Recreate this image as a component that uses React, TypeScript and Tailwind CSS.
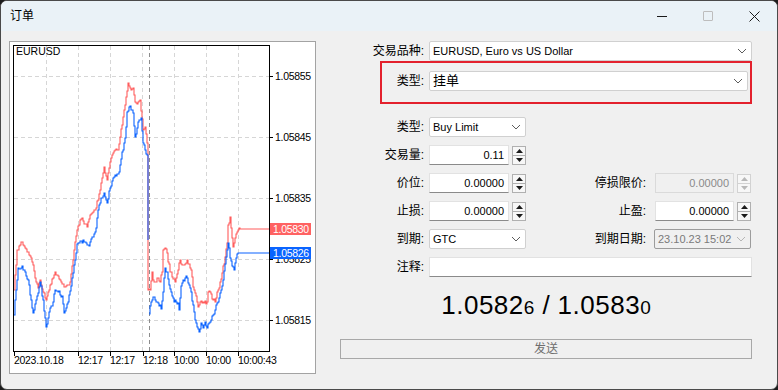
import React from "react";

type Pt = [number, number];

// pseudo random so the tick noise stays the same between renders
function rng(seed: number) {
  let s = seed;
  return () => {
    s = (s * 16807) % 2147483647;
    return s / 2147483647;
  };
}

function stepPath(segments: Pt[][], seed: number, amp = 2.2) {
  const r = rng(seed);
  let d = "";
  for (const pts of segments) {
    d += `M${pts[0][0]} ${pts[0][1]}`;
    for (let i = 1; i < pts.length; i++) {
      const [x0, y0] = pts[i - 1];
      const [x1, y1] = pts[i];
      if (x1 === x0) {
        d += ` V${y1}`;
        continue;
      }
      if (y0 === y1 && x1 - x0 > 8) {
        d += ` H${x1}`;
        continue;
      }
      for (let x = x0 + 1; x <= x1; x++) {
        const t = (x - x0) / (x1 - x0);
        let y = y0 + (y1 - y0) * t;
        if (x < x1) y += (r() - 0.5) * 2 * amp;
        d += ` H${x} V${Math.round(y)}`;
      }
    }
  }
  return d;
}

const bid: Pt[][] = [
  [
    [14, 315], [16, 290], [18, 268], [22, 266], [25, 272], [28, 280], [31, 300], [33, 313],
    [36, 300], [40, 282], [43, 300], [46, 327], [49, 312], [52, 306], [55, 290], [58, 292],
    [62, 296], [64, 313], [68, 302], [72, 278], [75, 260], [77, 244], [80, 241], [85, 242],
    [88, 245], [90, 242], [93, 237], [96, 228], [98, 210], [101, 198], [104, 193], [107, 203],
    [110, 188], [113, 178], [116, 176], [118, 174], [120, 165], [122, 152], [125, 138],
    [127, 112], [129, 107], [131, 110], [133, 113], [135, 137], [137, 128], [139, 120],
    [141, 118], [143, 143], [145, 150], [147, 155], [148, 162], [148, 240],
  ],
  [
    [149, 314], [150, 306], [152, 300], [154, 297], [156, 302], [158, 303], [160, 305],
    [161, 309], [163, 292], [165, 268], [167, 272], [169, 285], [171, 292], [173, 298],
    [176, 302], [178, 303], [179, 310], [181, 286], [183, 280], [185, 278], [187, 278],
    [189, 285], [191, 292], [193, 305], [195, 320], [197, 327], [199, 332], [201, 323],
    [203, 328], [205, 322], [207, 328], [209, 323], [211, 320], [213, 315], [215, 310],
    [217, 303], [219, 298], [221, 290], [223, 280], [225, 264], [227, 250], [228, 243],
    [230, 258], [232, 266], [234, 270], [236, 258], [238, 253], [269, 253],
  ],
];

const ask: Pt[][] = [
  [
    [14, 290], [16, 265], [17, 250], [20, 245], [22, 242], [25, 248], [28, 252], [31, 258],
    [33, 265], [36, 282], [38, 288], [40, 280], [43, 292], [46, 300], [48, 292], [50, 285],
    [53, 278], [55, 272], [58, 276], [60, 280], [63, 284], [65, 287], [68, 285], [70, 282],
    [73, 260], [75, 242], [77, 230], [80, 220], [82, 218], [85, 224], [87, 227], [90, 215],
    [93, 212], [95, 210], [98, 200], [100, 190], [102, 178], [104, 167], [107, 180],
    [110, 162], [112, 155], [115, 150], [118, 150], [120, 137], [123, 117], [126, 97],
    [128, 83], [130, 88], [131, 90], [133, 88], [135, 102], [138, 102], [140, 100],
    [143, 130], [145, 127], [147, 143], [148, 148], [148, 290], [150, 290], [152, 272],
    [153, 280], [155, 282], [158, 278], [160, 282], [162, 272], [163, 250], [165, 248],
    [167, 253], [168, 262], [172, 277], [175, 282], [178, 270], [180, 260], [183, 265],
    [187, 260], [190, 268], [192, 277], [193, 287], [197, 302], [198, 307], [200, 302],
    [207, 302], [208, 292], [210, 292], [213, 300], [215, 302], [218, 290], [222, 273],
    [225, 257], [227, 243], [228, 225], [230, 217], [232, 238], [233, 247], [235, 238],
    [237, 232], [238, 230], [240, 229], [269, 229],
  ],
];

const gridX = [46, 78, 110, 142, 174, 206, 238];
const gridY = [76, 137, 198, 259, 320];
const prices = ["1.05855", "1.05845", "1.05835", "1.05825", "1.05815"];
const times: [number, string][] = [
  [14, "2023.10.18"],
  [78, "12:17"],
  [110, "12:17"],
  [143, "12:18"],
  [174, "10:00"],
  [206, "10:00"],
  [238, "10:00:43"],
];

function Chart() {
  const font = "Liberation Sans, Arial, sans-serif";
  return (
    <svg width="305" height="331" viewBox="10 42 305 331">
      <defs>
        <clipPath id="plot">
          <rect x="14" y="46" width="255" height="305" />
        </clipPath>
      </defs>
      {gridX.map((x) => (
        <line key={x} x1={x + 0.5} y1={46} x2={x + 0.5} y2={351} stroke="#d6d6d6" strokeDasharray="4 3" />
      ))}
      {gridY.map((y) => (
        <line key={y} x1={14} y1={y + 0.5} x2={269} y2={y + 0.5} stroke="#d6d6d6" strokeDasharray="4 3" />
      ))}
      <line x1={149.5} y1={46} x2={149.5} y2={351} stroke="#8c8c8c" strokeDasharray="4 3" />
      <g clipPath="url(#plot)" fill="none" strokeWidth="1.1" strokeLinejoin="miter">
        <path d={stepPath(ask, 7)} stroke="#ff5c5c" />
        <path d={stepPath(bid, 13)} stroke="#0a62ff" />
      </g>
      <rect x="13.5" y="45.5" width="256" height="306" fill="none" stroke="#000" />
      <text x="16" y="55" fontSize="10.5" fontFamily={font} fill="#000">
        EURUSD
      </text>
      {gridY.map((y, i) => (
        <g key={y}>
          <line x1={269} y1={y + 0.5} x2={273} y2={y + 0.5} stroke="#000" />
          <text x="275" y={y + 4} fontSize="10.5" fontFamily={font} fill="#000" letterSpacing="-0.3">
            {prices[i]}
          </text>
        </g>
      ))}
      {times.map(([x, t], i) => (
        <g key={i}>
          <line x1={x + 0.5} y1={351} x2={x + 0.5} y2={356} stroke="#000" />
          <text x={x} y={364} fontSize="10.5" fontFamily={font} fill="#000" letterSpacing="-0.3">
            {t}
          </text>
        </g>
      ))}
      <rect x="270" y="223" width="41" height="12" fill="#ff6262" />
      <text x="273" y="233" fontSize="10.5" fontFamily={font} fill="#fff" letterSpacing="-0.3">
        1.05830
      </text>
      <rect x="270" y="247" width="41" height="12" fill="#0a64ff" />
      <text x="273" y="257" fontSize="10.5" fontFamily={font} fill="#fff" letterSpacing="-0.3">
        1.05826
      </text>
    </svg>
  );
}

function Chevron({ color = "#5c5c5c" }: { color?: string }) {
  return (
    <svg width="10" height="6" viewBox="0 0 10 6">
      <path d="M1 1 L5 5 L9 1" fill="none" stroke={color} strokeWidth="1" />
    </svg>
  );
}

function Spin({ disabled }: { disabled?: boolean }) {
  const c = disabled ? "#b8b8b8" : "#1a1a1a";
  const b = disabled ? "border-[#d2d2d2]" : "border-[#b0b0b0]";
  return (
    <div className={`ml-[3px] flex h-[19px] w-[14px] flex-col border bg-[#f7f7f7] ${b}`}>
      <div className={`flex flex-1 items-center justify-center border-b ${b}`}>
        <svg width="7" height="4" viewBox="0 0 7 4">
          <path d="M0 4 L3.5 0 L7 4Z" fill={c} />
        </svg>
      </div>
      <div className="flex flex-1 items-center justify-center">
        <svg width="7" height="4" viewBox="0 0 7 4">
          <path d="M0 0 L3.5 4 L7 0Z" fill={c} />
        </svg>
      </div>
    </div>
  );
}

function NumInput({ value, width = "w-[80px]", disabled }: { value: string; width?: string; disabled?: boolean }) {
  return (
    <div className="flex items-center">
      <div
        className={`flex h-[20px] items-center justify-end border pr-[4px] text-[11px] ${width} ${
          disabled
            ? "border-[#dadada] bg-[#f0f0f0] text-[#8a8a8a]"
            : "border-[#e2e2e2] border-b-[#8a8a8a] bg-white text-black"
        }`}
      >
        {value}
      </div>
      <Spin disabled={disabled} />
    </div>
  );
}

function Select({ value, width, big }: { value: string; width: string; big?: boolean }) {
  return (
    <div
      className={`flex h-[20px] items-center justify-between rounded-[2px] border border-[#d0d0d0] bg-white pl-[3px] pr-[4px] text-black ${width} ${
        big ? "text-[13px]" : "text-[11px]"
      }`}
    >
      <span>{value}</span>
      <Chevron />
    </div>
  );
}

export default function App() {
  const label = "w-[84px] shrink-0 text-right text-[12px] text-black";
  const rlabel = "w-[120px] shrink-0 text-right text-[12px] text-black";
  return (
    <div className="h-[390px] w-[778px] bg-[#1c1c1c] font-['Liberation_Sans','Noto_Sans_CJK_SC',sans-serif]">
      <div className="flex h-[390px] w-[778px] flex-col overflow-hidden rounded-[7px] border border-[#4a4a4a] bg-[#f0f0f0]">
        {/* title bar */}
        <div className="flex h-[30px] shrink-0 items-center bg-[#eaf2f7]">
          <span className="pl-[9px] text-[12px] text-black">订单</span>
          <div className="ml-auto flex h-full">
            <div className="flex w-[46px] items-center justify-center">
              <div className="h-px w-[10px] bg-[#1a1a1a]" />
            </div>
            <div className="flex w-[46px] items-center justify-center">
              <div className="h-[10px] w-[10px] rounded-[1px] border border-[#bdbdbd]" />
            </div>
            <div className="flex w-[46px] items-center justify-center">
              <svg width="11" height="11" viewBox="0 0 11 11">
                <path d="M0.5 0.5 L10.5 10.5 M10.5 0.5 L0.5 10.5" stroke="#1a1a1a" strokeWidth="1" />
              </svg>
            </div>
          </div>
        </div>

        <div className="flex">
          {/* chart */}
          <div className="ml-[8px] mt-[10px] h-[333px] w-[307px] shrink-0 border border-[#a3a3a3] bg-white">
            <Chart />
          </div>

          {/* order form */}
          <div className="ml-[24px] mt-[10px] flex w-[412px] flex-col">
            <div className="flex h-[20px] items-center">
              <div className={label}>交易品种:</div>
              <div className="ml-[5px]">
                <Select value="EURUSD, Euro vs US Dollar" width="w-[323px]" />
              </div>
            </div>

            <div className="ml-[40px] w-[372px] border-2 border-[#e3212d] pb-[11px] pt-[8px]">
              <div className="flex h-[20px] items-center">
                <div className="w-[42px] shrink-0 text-right text-[12px] text-black">类型:</div>
                <div className="ml-[5px]">
                  <Select value="挂单" width="w-[319px]" big />
                </div>
              </div>
            </div>

            <div className="mt-[13px] flex flex-col gap-[8px]">
              <div className="flex h-[20px] items-center">
                <div className={label}>类型:</div>
                <div className="ml-[5px]">
                  <Select value="Buy Limit" width="w-[97px]" />
                </div>
              </div>

              <div className="flex h-[20px] items-center">
                <div className={label}>交易量:</div>
                <div className="ml-[5px]">
                  <NumInput value="0.11" />
                </div>
              </div>

              <div className="flex h-[20px] items-center">
                <div className={label}>价位:</div>
                <div className="ml-[5px]">
                  <NumInput value="0.00000" />
                </div>
                <div className={rlabel}>停损限价:</div>
                <div className="ml-[9px]">
                  <NumInput value="0.00000" width="w-[79px]" disabled />
                </div>
              </div>

              <div className="flex h-[20px] items-center">
                <div className={label}>止损:</div>
                <div className="ml-[5px]">
                  <NumInput value="0.00000" />
                </div>
                <div className={rlabel}>止盈:</div>
                <div className="ml-[9px]">
                  <NumInput value="0.00000" width="w-[79px]" />
                </div>
              </div>

              <div className="flex h-[20px] items-center">
                <div className={label}>到期:</div>
                <div className="ml-[5px]">
                  <Select value="GTC" width="w-[97px]" />
                </div>
                <div className={rlabel}>到期日期:</div>
                <div className="ml-[8px] flex h-[20px] w-[97px] items-center justify-between rounded-[2px] border border-[#9c9c9c] bg-[#f0f0f0] pl-[3px] pr-[4px] text-[11px] text-[#7a7a7a]">
                  <span>23.10.23 15:02</span>
                  <Chevron color="#b5b5b5" />
                </div>
              </div>

              <div className="flex h-[20px] items-center">
                <div className={label}>注释:</div>
                <div className="ml-[5px] h-[20px] w-[323px] border border-[#e2e2e2] border-b-[#8a8a8a] bg-white" />
              </div>
            </div>

            <div className="mt-[13px] flex h-[30px] items-baseline justify-center leading-[30px] text-black">
              <span className="text-[26px] tracking-[0.5px]">1.0582</span>
              <span className="text-[19px]">6</span>
              <span className="px-[8px] text-[26px]">/</span>
              <span className="text-[26px] tracking-[0.5px]">1.0583</span>
              <span className="text-[19px]">0</span>
            </div>

            <div className="mt-[19px] flex h-[20px] w-[412px] items-center justify-center border border-[#a8a8a8] bg-[#f0f0f0] text-[12px] text-[#6e6e6e]">
              发送
            </div>
          </div>
        </div>
      </div>
    </div>
  );
}
